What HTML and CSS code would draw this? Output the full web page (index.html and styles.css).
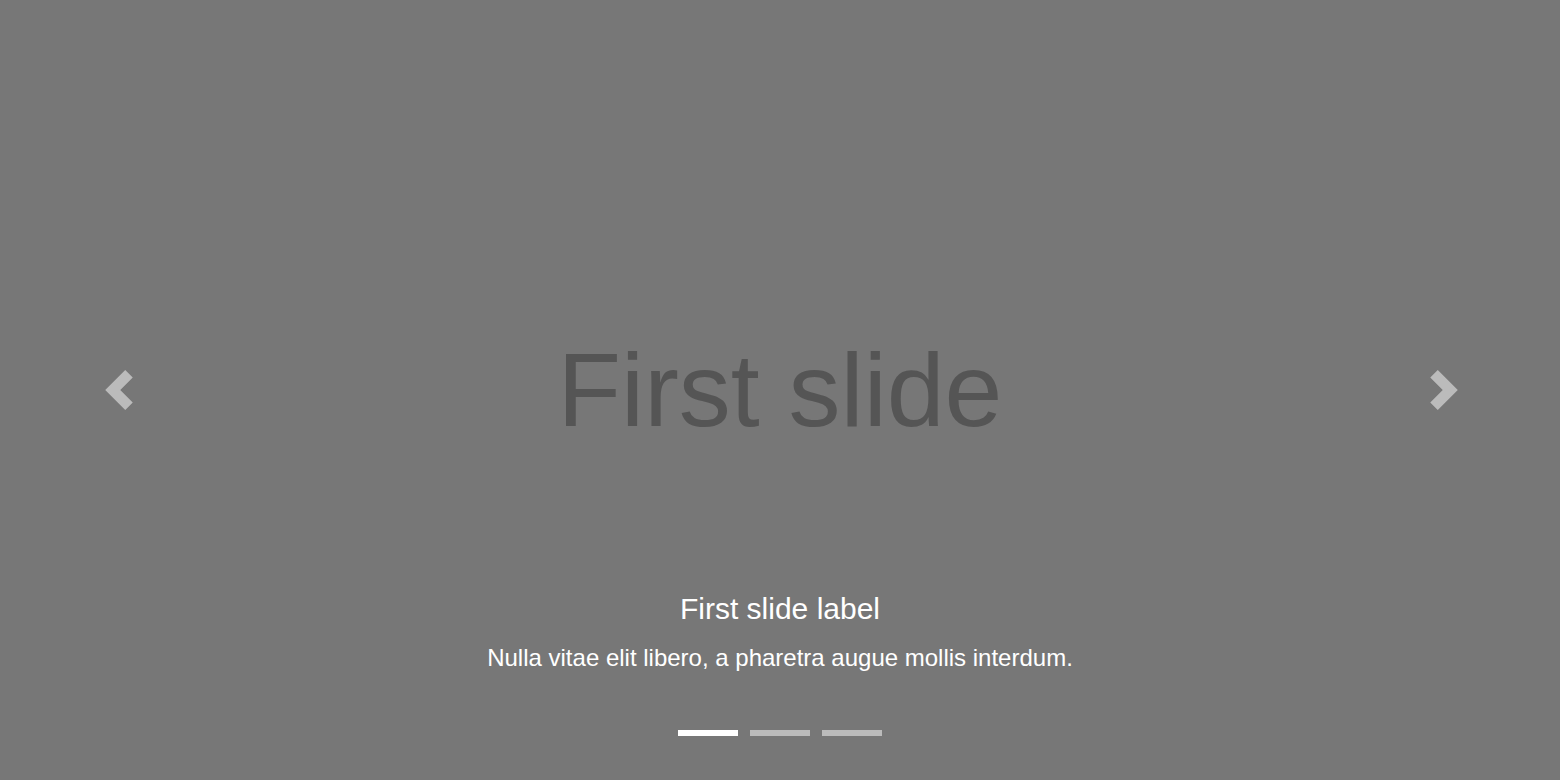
FILE: index.html
```html
<!DOCTYPE html>
<html lang="en">
<head>
<meta charset="utf-8">
<title>Carousel</title>
<link rel="stylesheet" href="styles.css">
</head>
<body>
<div class="carousel">
  <div class="slide">
    <div class="slide-text">First slide</div>
  </div>
  <div class="caption">
    <h5 class="caption-title">First slide label</h5>
    <p class="caption-text">Nulla vitae elit libero, a pharetra augue mollis interdum.</p>
  </div>
  <a class="control control-prev" href="#" aria-label="Previous">
    <svg class="control-icon" viewBox="0 0 8 8" width="40" height="40"><path d="M5.25 0l-4 4 4 4 1.5-1.5L4.25 4l2.5-2.5L5.25 0z" fill="#fff"/></svg>
  </a>
  <a class="control control-next" href="#" aria-label="Next">
    <svg class="control-icon" viewBox="0 0 8 8" width="40" height="40"><path d="M2.75 0l-1.5 1.5L3.75 4l-2.5 2.5L2.75 8l4-4-4-4z" fill="#fff"/></svg>
  </a>
  <ol class="indicators">
    <li class="indicator active"></li>
    <li class="indicator"></li>
    <li class="indicator"></li>
  </ol>
</div>
</body>
</html>
```
FILE: styles.css
```css
html, body {
  margin: 0;
  padding: 0;
}
body {
  font-family: "Liberation Sans", Arial, sans-serif;
  background: #777;
}
.carousel {
  position: relative;
  width: 1560px;
  height: 780px;
  background: #777;
  overflow: hidden;
}
.slide {
  height: 100%;
  display: flex;
  align-items: center;
  justify-content: center;
}
.slide-text {
  color: #555;
  font-size: 104px;
  line-height: 1;
}
.caption {
  position: absolute;
  left: 15%;
  right: 15%;
  bottom: 104px;
  text-align: center;
  color: #fff;
}
.caption-title {
  margin: 0 0 13px;
  font-size: 30px;
  font-weight: 400;
  line-height: 36px;
}
.caption-text {
  margin: 0;
  font-size: 24px;
  line-height: 36px;
}
.control {
  position: absolute;
  top: 0;
  bottom: 0;
  width: 15%;
  display: flex;
  align-items: center;
  justify-content: center;
  opacity: .5;
}
.control-prev { left: 2px; }
.control-next { right: -1px; }
.control-icon {
  display: block;
}
.indicators {
  position: absolute;
  left: 0;
  right: 0;
  bottom: 44px;
  margin: 0;
  padding: 0;
  list-style: none;
  display: flex;
  justify-content: center;
  gap: 12px;
}
.indicator {
  width: 60px;
  height: 6px;
  background: #fff;
  opacity: .5;
}
.indicator.active {
  opacity: 1;
}
```
